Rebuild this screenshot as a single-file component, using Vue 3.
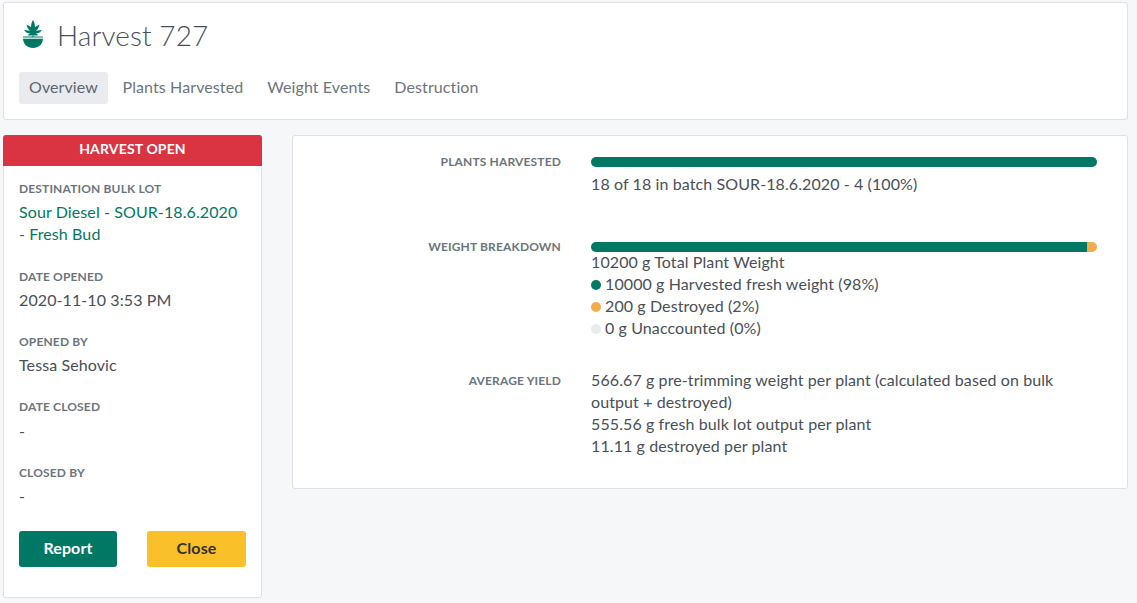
<script setup>
const details = [
  { label: 'Date Opened', value: '2020-11-10 3:53 PM' },
  { label: 'Opened By', value: 'Tessa Sehovic' },
  { label: 'Date Closed', value: '-' },
  { label: 'Closed By', value: '-' }
]
const tabs = ['Overview', 'Plants Harvested', 'Weight Events', 'Destruction']
</script>

<template>
  <div class="page">
    <header class="card head">
      <div class="title">
        <svg class="logo" width="22" height="30" viewBox="0 0 22 30">
          <path fill="#017864" d="M11 1C12.200 3 13 5.500 13 8L17.500 5.500C17 8.500 15.500 10.500 14 11.800L20 11C18.500 13.500 16 14.500 13.800 14.600L16.500 16C14.500 16.800 12.800 16.800 11.500 16L11.700 18H10.300L10.500 16C9.200 16.800 7.500 16.800 5.500 16L8.200 14.600C6 14.500 3.500 13.500 2 11L8 11.800C6.500 10.500 5 8.500 4.500 5.500L9 8C9 5.500 9.800 3 11 1Z"/>
          <rect x="1" y="17.500" width="20" height="1" fill="#017864"/>
          <path fill="#017864" d="M1 19.800H21C20.700 25.500 16.500 29 11 29S1.300 25.500 1 19.800Z"/>
        </svg>
        <h1>Harvest 727</h1>
      </div>
      <nav class="tabs">
        <a v-for="(tab, i) in tabs" :key="tab" class="tab" :class="{ active: i === 0 }">{{ tab }}</a>
      </nav>
    </header>

    <div class="columns">
      <aside class="card side">
        <div class="status">HARVEST OPEN</div>
        <div class="side-body">
          <div class="field first">
            <div class="label">Destination Bulk Lot</div>
            <a class="lot">Sour Diesel - SOUR-18.6.2020 - Fresh Bud</a>
          </div>
          <div v-for="item in details" :key="item.label" class="field">
            <div class="label">{{ item.label }}</div>
            <div class="value">{{ item.value }}</div>
          </div>
          <div class="actions">
            <button class="btn report">Report</button>
            <button class="btn close">Close</button>
          </div>
        </div>
      </aside>

      <main class="card stats">
        <section class="row harvested">
          <div class="label row-label">Plants Harvested</div>
          <div class="row-body">
            <div class="bar"><span class="seg green" style="width: 100%"></span></div>
            <div class="bar-note">18 of 18 in batch SOUR-18.6.2020 - 4 (100%)</div>
          </div>
        </section>

        <section class="row breakdown">
          <div class="label row-label">Weight Breakdown</div>
          <div class="row-body">
            <div class="bar tight"><span class="seg green" style="width: 98.04%"></span><span class="seg orange" style="width: 1.96%"></span></div>
            <div>10200 g Total Plant Weight</div>
            <div><i class="dot green"></i>10000 g Harvested fresh weight (98%)</div>
            <div><i class="dot orange"></i>200 g Destroyed (2%)</div>
            <div><i class="dot grey"></i>0 g Unaccounted (0%)</div>
          </div>
        </section>

        <section class="row yield">
          <div class="label row-label">Average Yield</div>
          <div class="row-body">
            <div>566.67 g pre-trimming weight per plant (calculated based on bulk output + destroyed)</div>
            <div>555.56 g fresh bulk lot output per plant</div>
            <div>11.11 g destroyed per plant</div>
          </div>
        </section>
      </main>
    </div>
  </div>
</template>

<style>
html, body {
  margin: 0;
  background: #f6f7f9;
}
</style>

<style scoped>
.page {
  height: 603px;
  box-sizing: border-box;
  padding: 2px 9px 0 3px;
  overflow: hidden;
  font-family: Lato, "Liberation Sans", sans-serif;
  font-size: 16px;
  line-height: 22px;
  letter-spacing: 0.1px;
  color: #495057;
}

.card {
  background: #fff;
  border: 1px solid #dee0e4;
  border-radius: 3px;
  box-sizing: border-box;
}

.head {
  height: 118px;
  padding: 15px 15px 0;
}

.title {
  display: flex;
  align-items: center;
  height: 36px;
}

.logo {
  margin: -4px 0 0 3px;
  flex: none;
}

h1 {
  margin: -2px 0 0 13px;
  font-size: 28px;
  font-weight: 300;
  line-height: 36px;
  color: #495057;
}

.tabs {
  display: flex;
  gap: 4px;
  margin-top: 18px;
}

.tab {
  padding: 4px 10px;
  height: 32px;
  box-sizing: border-box;
  border-radius: 3px;
  color: #6c757d;
}

.tab.active {
  margin-right: 0.6px;
  background: #e9ebef;
  color: #5c6670;
}

.columns {
  display: flex;
  align-items: flex-start;
  gap: 30px;
  margin-top: 15px;
}

.side {
  width: 259px;
  height: 463px;
  flex: none;
}

.status {
  margin: -1px -1px 0;
  height: 31px;
  line-height: 28px;
  background: #da3341;
  border-radius: 3px 3px 0 0;
  color: #fff;
  font-size: 14px;
  font-weight: 700;
  letter-spacing: 0.15px;
  text-align: center;
}

.side-body {
  padding: 0 15px;
}

.label {
  font-size: 12px;
  font-weight: 700;
  line-height: 16px;
  letter-spacing: 0.15px;
  text-transform: uppercase;
  color: #6c757d;
}

.field {
  margin-top: 23px;
}

.field.first {
  margin-top: 14.5px;
  margin-bottom: 24px;
}

.field .label {
  margin-bottom: 4.33px;
}

.lot {
  color: #017864;
}

.actions {
  display: flex;
  justify-content: space-between;
  margin-top: 24px;
}

.btn {
  height: 36px;
  padding: 0 0 4px;
  border: none;
  border-radius: 3px;
  font-family: inherit;
  font-size: 16px;
  font-weight: 700;
  letter-spacing: inherit;
}

.report {
  width: 98px;
  background: #017864;
  color: #fff;
}

.close {
  width: 99px;
  background: #fac02a;
  color: #33312a;
}

.stats {
  flex: 1;
  height: 354px;
  padding: 0 30px 0 0;
}

.row {
  display: flex;
  gap: 30px;
}

.harvested {
  margin-top: 21px;
}

.breakdown {
  margin-top: 47px;
}

.yield {
  margin-top: 30px;
}

.row-label {
  width: 268px;
  flex: none;
  text-align: right;
  line-height: 10px;
}

.row-body {
  flex: 1;
}

.yield .row-label {
  line-height: 22px;
  padding-top: 1px;
}

.bar {
  display: flex;
  height: 10px;
  border-radius: 5px;
  overflow: hidden;
  background: #e9ebef;
}

.bar.tight {
  margin-bottom: -1px;
}

.seg {
  display: block;
  height: 100%;
}

.bar-note {
  margin-top: 6px;
}

.green {
  background: #017864;
}

.orange {
  background: #f0ad4e;
}

.grey {
  background: #e9ebef;
}

.dot {
  display: inline-block;
  width: 10px;
  height: 10px;
  border-radius: 50%;
  margin-right: 4px;
}
</style>
